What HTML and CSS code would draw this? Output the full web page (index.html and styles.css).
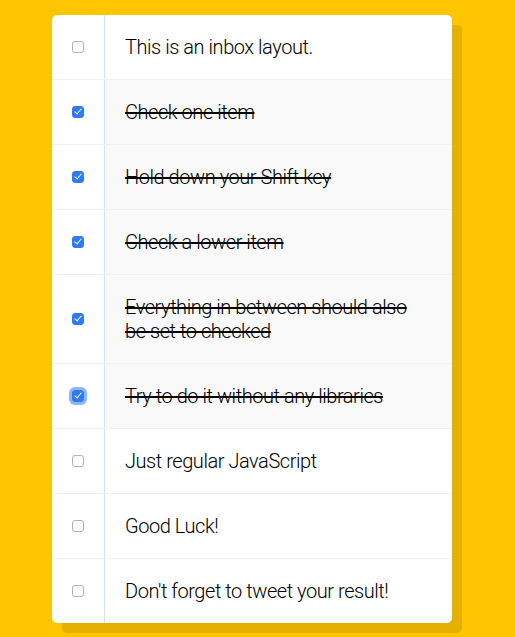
FILE: index.html
```html
<!DOCTYPE html>
<html>
<head>
<meta charset="utf-8">
<link rel="stylesheet" href="styles.css">
</head>
<body>
<div class="inbox">
  <div class="item"><input type="checkbox"><p>This is an inbox layout.</p></div>
  <div class="item"><input type="checkbox" checked><p>Check one item</p></div>
  <div class="item"><input type="checkbox" checked><p>Hold down your Shift key</p></div>
  <div class="item"><input type="checkbox" checked><p>Check a lower item</p></div>
  <div class="item"><input type="checkbox" checked><p>Everything in between should also be set to checked</p></div>
  <div class="item"><input type="checkbox" class="focused" checked><p>Try to do it without any libraries</p></div>
  <div class="item"><input type="checkbox"><p>Just regular JavaScript</p></div>
  <div class="item"><input type="checkbox"><p>Good Luck!</p></div>
  <div class="item"><input type="checkbox"><p>Don't forget to tweet your result!</p></div>
</div>
</body>
</html>
```
FILE: styles.css
```css
html {
  background: #ffc600;
  font-family: Roboto, "Liberation Sans", Arial, sans-serif;
}
body {
  margin: 0;
  padding: 15px 0 15px 52px;
}
.inbox {
  width: 400px;
  background: #fff;
  border-radius: 5px;
  box-shadow: 10px 10px 0 rgba(0, 0, 0, 0.1);
  overflow: hidden;
}
.item {
  display: flex;
  align-items: stretch;
  border-bottom: 1px solid #f1f1f1;
}
.item:last-child {
  border-bottom: 0;
}
input[type="checkbox"] {
  appearance: none;
  -webkit-appearance: none;
  box-sizing: border-box;
  position: relative;
  margin: 0 20px;
  width: 12px;
  height: 12px;
  flex: none;
  align-self: center;
  border: 1px solid #b3b3b3;
  border-radius: 3px;
  background: #fff;
}
input[type="checkbox"]:checked {
  background: #2f7bf6;
  border-color: #2f7bf6;
}
input[type="checkbox"]:checked::after {
  content: "";
  position: absolute;
  left: 3px;
  top: 0px;
  width: 3px;
  height: 6px;
  border: solid #fff;
  border-width: 0 1.6px 1.6px 0;
  transform: rotate(40deg);
}
input.focused {
  box-shadow: 0 0 0 3px rgba(47, 123, 246, 0.55);
}
p {
  margin: 0;
  padding: 20px 30px 20px 20px;
  flex: 1;
  font-size: 20px;
  line-height: 24px;
  font-weight: 300;
  letter-spacing: -0.45px;
  color: #000;
  border-left: 1px solid #d1e2ff;
}
input:checked + p {
  background: #f9f9f9;
  text-decoration: line-through;
  text-decoration-thickness: 1.5px;
}
```
